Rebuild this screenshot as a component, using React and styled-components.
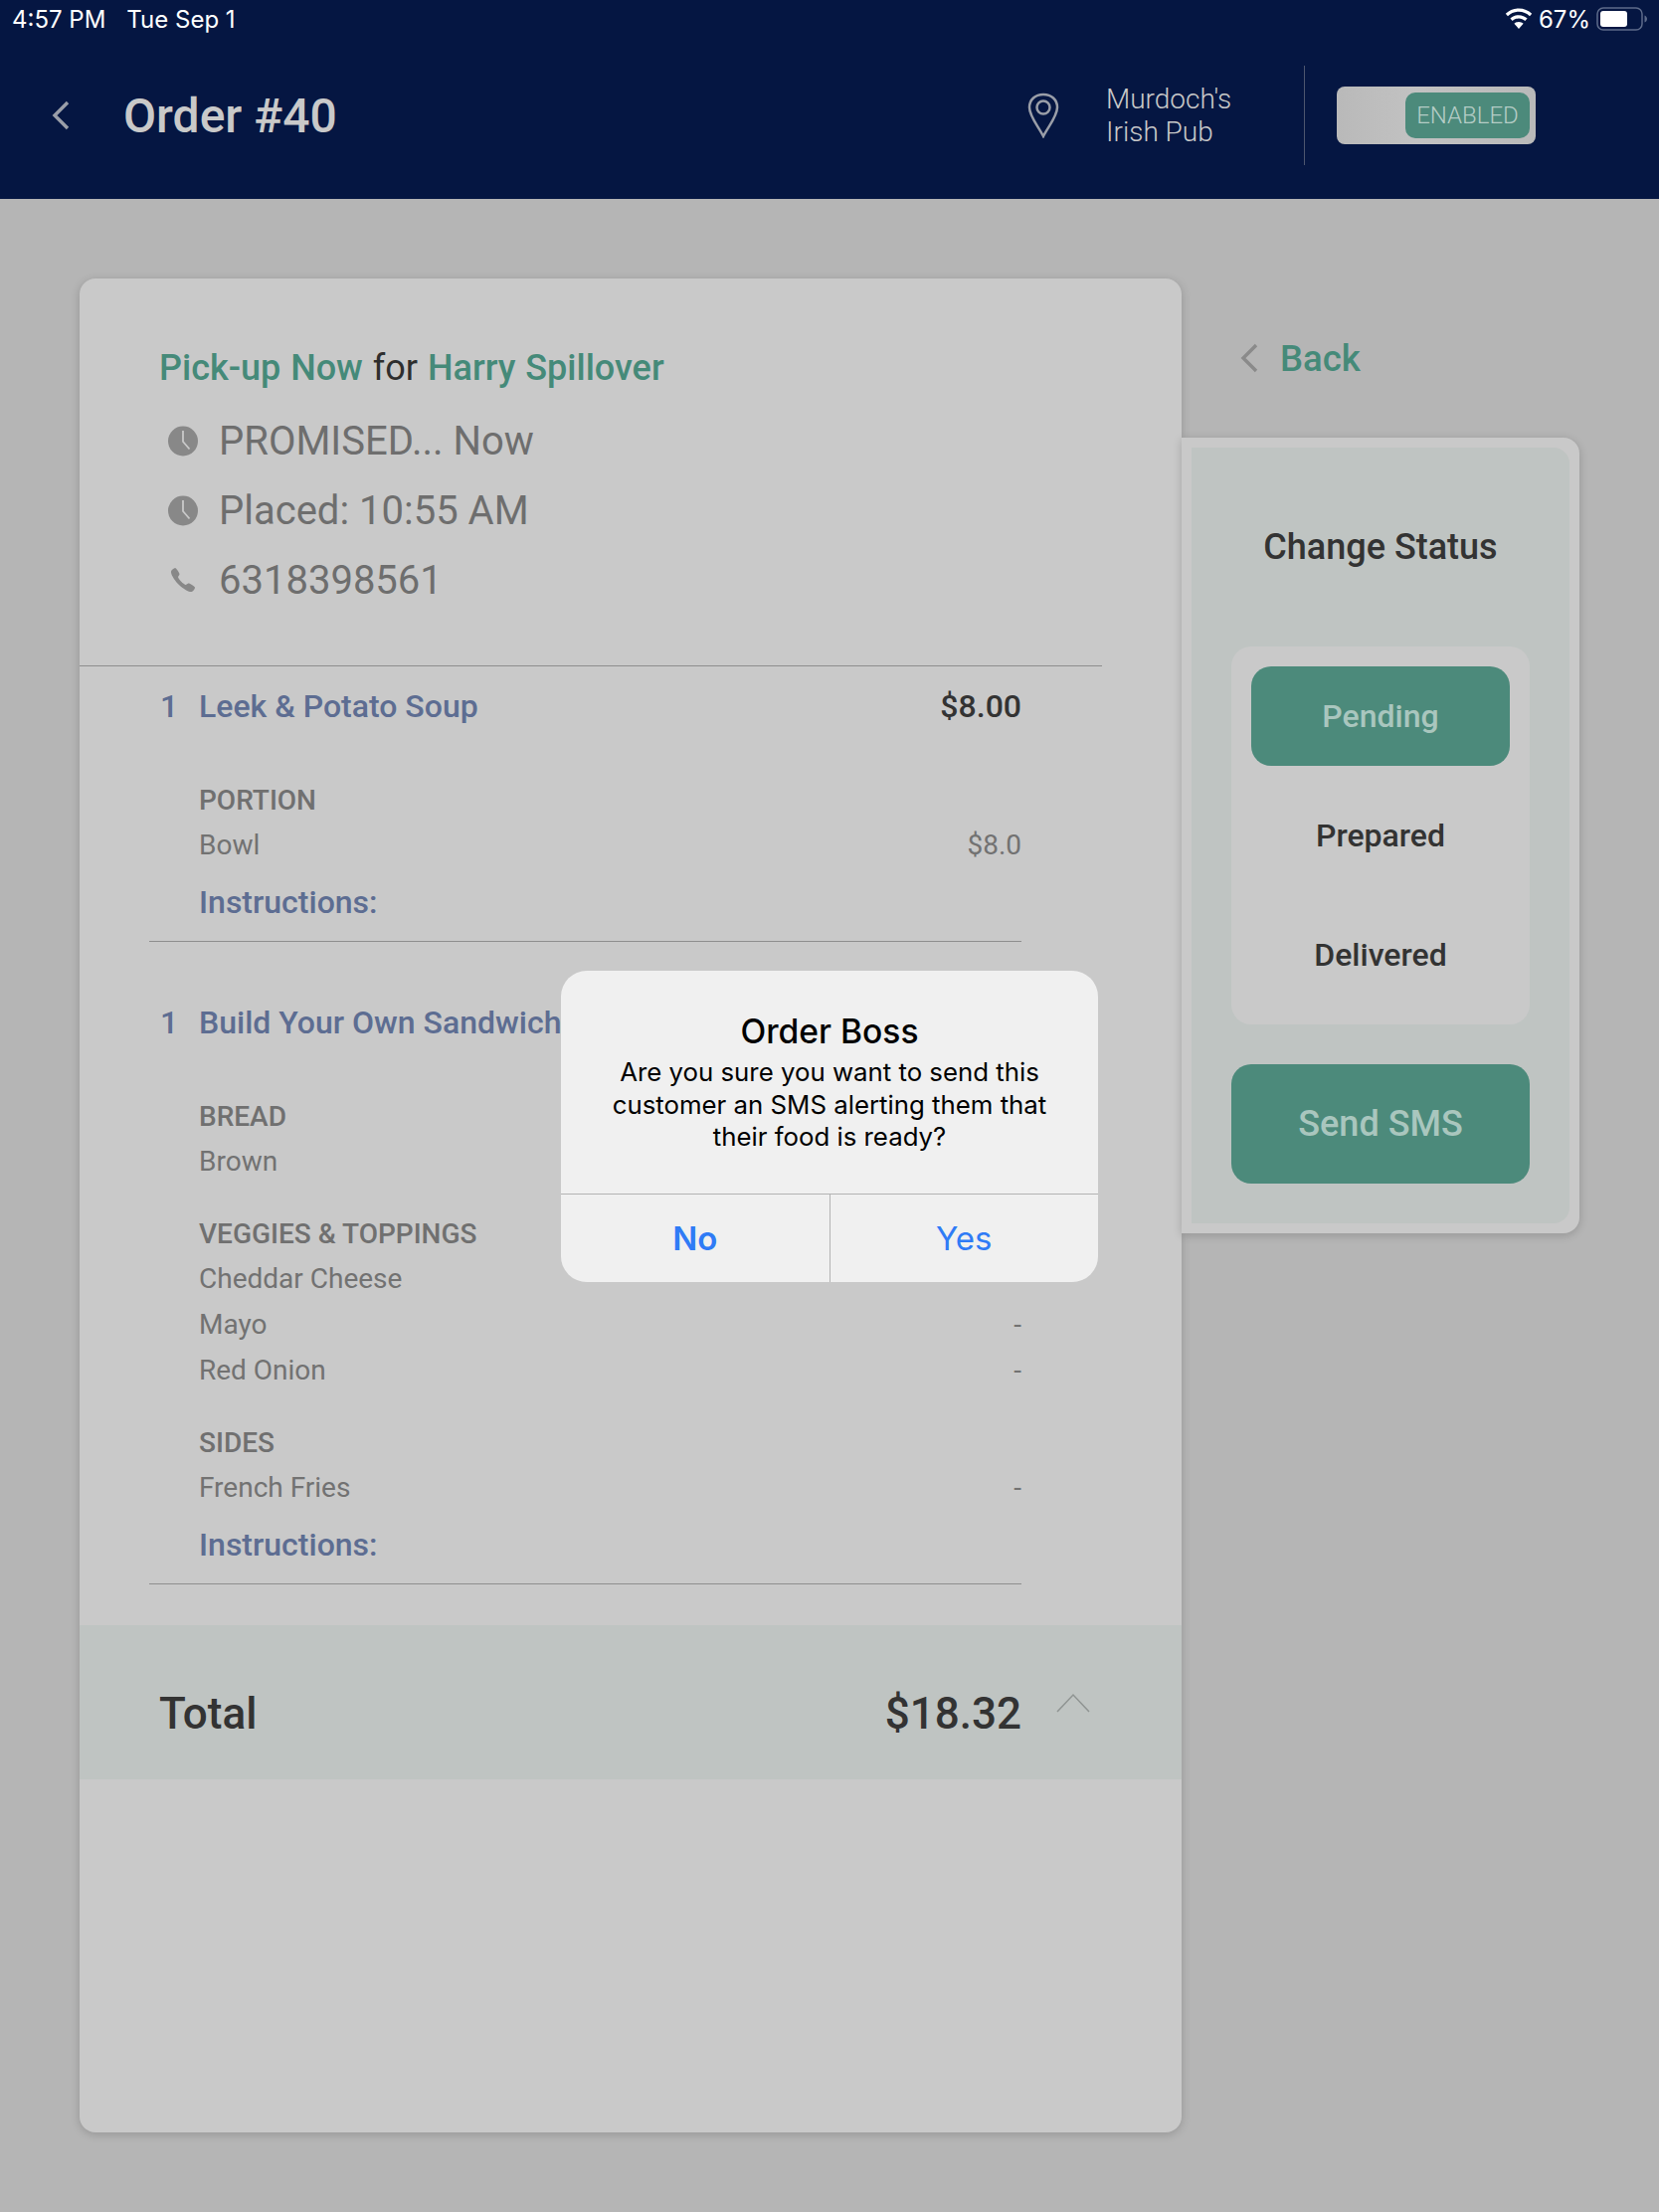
import React from "react";
import styled, { createGlobalStyle } from "styled-components";
import { IoIosCall } from "react-icons/io";

const GlobalStyle = createGlobalStyle`
    html, body {
        margin: 0;
        padding: 0;
        background: #b5b5b5;
    }

    * {
        box-sizing: border-box;
    }
`;

const Page = styled.div`
    position: relative;
    width: 1668px;
    height: 2224px;
    overflow: hidden;
    background: #b5b5b5;
    font-family: Roboto, "Liberation Sans", sans-serif;
`;

const Header = styled.header`
    height: 200px;
    background: #051642;
    display: flex;
    flex-direction: column;
`;

const StatusBar = styled.div`
    height: 38px;
    padding: 0 11px 0 12px;
    display: flex;
    align-items: center;
    justify-content: space-between;
    color: #fff;
    font-family: Inter, sans-serif;
    font-size: 24px;
`;

const StatusGroup = styled.div`
    display: flex;
    align-items: center;
    gap: ${(p) => p.$gap}px;
`;

const NavBar = styled.div`
    flex: 1;
    display: flex;
    align-items: center;
    padding: 0 124px 6px 52px;
`;

const Title = styled.h1`
    margin: 0 0 0 54px;
    flex: 1;
    font-size: 48px;
    font-weight: 500;
    color: #c9c9c9;
`;

const Venue = styled.div`
    margin-left: 47px;
    width: 199px;
    font-size: 28px;
    line-height: 33px;
    font-weight: 300;
    color: #c9c9c9;
`;

const Divider = styled.div`
    width: 1px;
    height: 100px;
    background: #4d566f;
`;

const Toggle = styled.div`
    margin-left: 32px;
    width: 200px;
    height: 58px;
    padding: 6px;
    display: flex;
    justify-content: flex-end;
    border-radius: 8px;
    background: linear-gradient(90deg, #b9b9b9, #c2c2c2 40%, #b9b9b9);
`;

const ToggleKnob = styled.div`
    width: 125px;
    height: 46px;
    display: flex;
    align-items: center;
    justify-content: center;
    border-radius: 10px;
    background: #4c8a7b;
    color: #b5cdc6;
    font-size: 24px;
    font-weight: 300;
`;

const Main = styled.main`
    display: flex;
    align-items: flex-start;
    padding: 80px 0 0 80px;
`;

const Card = styled.section`
    width: 1108px;
    height: 1864px;
    padding-top: 65px;
    border-radius: 16px;
    background: #c9c9c9;
    box-shadow: 0 2px 10px rgba(0, 0, 0, 0.18);
`;

const Summary = styled.div`
    padding: 0 80px;
`;

const SummaryTitle = styled.div`
    font-size: 36px;
    line-height: 50px;
    margin-bottom: 13px;
    word-spacing: 1px;
    color: #2e2e2e;
`;

const Accent = styled.span`
    font-weight: 500;
    color: #458a79;
`;

const InfoRow = styled.div`
    height: 70px;
    display: flex;
    align-items: center;
    gap: 20px;
    padding-left: 8px;
    font-size: 40px;
    color: #6e6e6e;
`;

const PhoneIcon = styled(IoIosCall)`
    flex: none;
    width: 32px;
    height: 32px;
    color: #888;
`;

const Rule = styled.hr`
    margin: ${(p) => p.$margin};
    border: 0;
    border-top: 1px solid #8e8e8e;
`;

const Item = styled.div`
    margin-top: ${(p) => (p.$first ? 0 : 41)}px;
    padding: 0 161px 0 81px;
`;

const ItemHead = styled.div`
    height: 80px;
    display: flex;
    align-items: center;
    margin-bottom: 34px;
    font-size: 32px;
    font-weight: 500;
`;

const Qty = styled.span`
    width: 39px;
    color: #5d6d92;
`;

const ItemName = styled.span`
    flex: 1;
    color: #5d6d92;
`;

const Price = styled.span`
    color: #333;
`;

const OptionGroup = styled.div`
    margin-bottom: 30px;
    padding-left: 39px;
`;

const OptionTitle = styled.div`
    height: 42px;
    line-height: 42px;
    font-size: 28px;
    font-weight: 500;
    color: #707070;
`;

const OptionRow = styled.div`
    height: 46px;
    display: flex;
    align-items: center;
    justify-content: space-between;
    font-size: 28px;
    color: #727272;
`;

const Instructions = styled.div`
    margin: -17px 0 17px 39px;
    height: 44px;
    line-height: 44px;
    font-size: 32px;
    font-weight: 500;
    color: #5d6d92;
`;

const TotalBar = styled.div`
    height: 155px;
    margin-top: 41px;
    padding: 23px 92px 0 80px;
    display: flex;
    align-items: center;
    background: #bfc4c2;
    color: #333;
    font-size: 44px;
    font-weight: 500;
`;

const TotalLabel = styled.span`
    flex: 1;
`;

const Caret = styled.svg`
    width: 34px;
    height: 20px;
    margin: -22px 0 0 35px;
`;

const Side = styled.aside`
    width: 400px;
`;

const BackLink = styled.div`
    height: 160px;
    padding-left: 59px;
    display: flex;
    align-items: center;
    gap: 22px;
    font-size: 36.5px;
    font-weight: 500;
    color: #458a79;
`;

const Panel = styled.div`
    height: 800px;
    padding: 10px;
    border-radius: 0 16px 16px 0;
    background: #c9c9c9;
    box-shadow: 0 2px 10px rgba(0, 0, 0, 0.18);
`;

const PanelInner = styled.div`
    height: 100%;
    padding: 0 40px;
    border-radius: 0 16px 16px 0;
    background: #bfc4c2;
`;

const PanelTitle = styled.div`
    height: 200px;
    padding-bottom: 1px;
    display: flex;
    align-items: center;
    justify-content: center;
    font-size: 36px;
    font-weight: 500;
    color: #333;
`;

const StatusList = styled.div`
    height: 380px;
    padding: 20px;
    display: flex;
    flex-direction: column;
    gap: 20px;
    border-radius: 20px;
    background: #c9c9c9;
`;

const StatusOption = styled.div`
    height: 100px;
    display: flex;
    align-items: center;
    justify-content: center;
    border-radius: 20px;
    font-size: 32px;
    font-weight: 500;
    color: ${(p) => (p.$active ? "#a9c6be" : "#333")};
    background: ${(p) => (p.$active ? "#4c8a7b" : "transparent")};
`;

const SmsButton = styled.div`
    height: 120px;
    margin-top: 40px;
    display: flex;
    align-items: center;
    justify-content: center;
    border-radius: 20px;
    background: #4c8a7b;
    color: #a9c6be;
    font-size: 36px;
    font-weight: 500;
`;

const Dialog = styled.div`
    position: absolute;
    left: 564px;
    top: 976px;
    width: 540px;
    height: 313px;
    display: flex;
    flex-direction: column;
    border-radius: 26px;
    overflow: hidden;
    background: #f0f0f0;
    color: #000;
    font-family: Inter, sans-serif;
`;

const DialogBody = styled.div`
    flex: 1;
    padding-top: 43px;
    text-align: center;
    font-size: 25.8px;
    line-height: 32.5px;
`;

const DialogTitle = styled.div`
    margin-bottom: 7px;
    font-size: 33.6px;
    line-height: 36px;
    font-weight: 500;
`;

const DialogActions = styled.div`
    height: 89px;
    display: flex;
    border-top: 1px solid #b3b3b3;
`;

const DialogAction = styled.div`
    flex: 1;
    display: flex;
    align-items: center;
    justify-content: center;
    font-size: 33px;
    font-weight: ${(p) => (p.$strong ? 600 : 400)};
    color: #2f7bf6;

    & + & {
        border-left: 1px solid #b3b3b3;
    }
`;

const Chevron = ({ color }) => (
    <svg width="18" height="30" viewBox="0 0 18 30" fill="none">
        <path d="M16 2 L3 15 L16 28" stroke={color} strokeWidth="3.4" />
    </svg>
);

const ClockIcon = () => (
    <svg width="32" height="32" viewBox="0 0 32 32" fill="none">
        <circle cx="16" cy="16.5" r="15" fill="#888" />
        <path d="M16 6 V17 L22.5 24.5" stroke="#c9c9c9" strokeWidth="1.8" />
    </svg>
);

const WifiIcon = () => (
    <svg width="28" height="22" viewBox="0 0 28 22" fill="#fff">
        <path d="M14 0.5C8.8 0.5 4.2 2.5 0.8 5.8L3 8.2C5.9 5.5 9.8 3.8 14 3.8s8.1 1.7 11 4.4l2.2-2.4C23.8 2.5 19.2 0.5 14 0.5z" />
        <path d="M14 7.2c-3.3 0-6.3 1.3-8.6 3.4l2.3 2.4c1.7-1.5 3.9-2.5 6.3-2.5s4.6 1 6.3 2.5l2.3-2.4C20.3 8.5 17.3 7.2 14 7.2z" />
        <path d="M14 14c-1.8 0-3.4 0.7-4.6 1.8L14 21l4.6-5.2C17.4 14.7 15.8 14 14 14z" />
    </svg>
);

const BatteryIcon = () => (
    <svg width="52" height="24" viewBox="0 0 52 24">
        <rect x="1" y="1" width="45" height="22" rx="6" fill="none" stroke="#5e6b8a" strokeWidth="1.5" />
        <rect x="4" y="4" width="27" height="16" rx="3" fill="#fff" />
        <path d="M48.5 8.5c1.5 0.5 2.5 2 2.5 3.5s-1 3-2.5 3.5z" fill="#5e6b8a" />
    </svg>
);

const PinIcon = () => (
    <svg width="32" height="46" viewBox="0 0 32 46" fill="none" stroke="#9a9ea8" strokeWidth="2.5">
        <path d="M16 44 C11 34 2 24 2 15 C2 7 8 2 16 2 C24 2 30 7 30 15 C30 24 21 34 16 44 Z" />
        <circle cx="16" cy="15" r="6.5" />
    </svg>
);

const items = [
    {
        name: "Leek & Potato Soup",
        price: "$8.00",
        groups: [{ title: "PORTION", rows: [["Bowl", "$8.0"]] }],
    },
    {
        name: "Build Your Own Sandwich",
        price: "",
        groups: [
            { title: "BREAD", rows: [["Brown", "-"]] },
            {
                title: "VEGGIES & TOPPINGS",
                rows: [["Cheddar Cheese", "-"], ["Mayo", "-"], ["Red Onion", "-"]],
            },
            { title: "SIDES", rows: [["French Fries", "-"]] },
        ],
    },
];

const App = () => (
    <Page>
        <GlobalStyle />
        <Header>
            <StatusBar>
                <StatusGroup $gap={21}>
                    <span>4:57 PM</span>
                    <span>Tue Sep 1</span>
                </StatusGroup>
                <StatusGroup $gap={6}>
                    <WifiIcon />
                    <span>67%</span>
                    <BatteryIcon />
                </StatusGroup>
            </StatusBar>
            <NavBar>
                <Chevron color="#9a9ea8" />
                <Title>Order #40</Title>
                <PinIcon />
                <Venue>Murdoch's<br />Irish Pub</Venue>
                <Divider />
                <Toggle>
                    <ToggleKnob>ENABLED</ToggleKnob>
                </Toggle>
            </NavBar>
        </Header>
        <Main>
            <Card>
                <Summary>
                    <SummaryTitle>
                        <Accent>Pick-up Now</Accent> for <Accent>Harry Spillover</Accent>
                    </SummaryTitle>
                    <InfoRow><ClockIcon />PROMISED... Now</InfoRow>
                    <InfoRow><ClockIcon />Placed: 10:55 AM</InfoRow>
                    <InfoRow><PhoneIcon />6318398561</InfoRow>
                </Summary>
                <Rule $margin="51px 80px 0 0" />
                {items.map((item, i) => (
                    <React.Fragment key={item.name}>
                        <Item $first={i === 0}>
                            <ItemHead>
                                <Qty>1</Qty>
                                <ItemName>{item.name}</ItemName>
                                <Price>{item.price}</Price>
                            </ItemHead>
                            {item.groups.map((group) => (
                                <OptionGroup key={group.title}>
                                    <OptionTitle>{group.title}</OptionTitle>
                                    {group.rows.map(([label, value]) => (
                                        <OptionRow key={label}>
                                            <span>{label}</span>
                                            <span>{value}</span>
                                        </OptionRow>
                                    ))}
                                </OptionGroup>
                            ))}
                            <Instructions>Instructions:</Instructions>
                        </Item>
                        <Rule $margin="0 161px 0 70px" />
                    </React.Fragment>
                ))}
                <TotalBar>
                    <TotalLabel>Total</TotalLabel>
                    <span>$18.32</span>
                    <Caret viewBox="0 0 34 20" fill="none">
                        <path d="M1 19 L17 2 L33 19" stroke="#8f9492" strokeWidth="1.5" />
                    </Caret>
                </TotalBar>
            </Card>
            <Side>
                <BackLink>
                    <Chevron color="#8a8a8a" />
                    Back
                </BackLink>
                <Panel>
                    <PanelInner>
                        <PanelTitle>Change Status</PanelTitle>
                        <StatusList>
                            <StatusOption $active>Pending</StatusOption>
                            <StatusOption>Prepared</StatusOption>
                            <StatusOption>Delivered</StatusOption>
                        </StatusList>
                        <SmsButton>Send SMS</SmsButton>
                    </PanelInner>
                </Panel>
            </Side>
        </Main>
        <Dialog>
            <DialogBody>
                <DialogTitle>Order Boss</DialogTitle>
                Are you sure you want to send this<br />
                customer an SMS alerting them that<br />
                their food is ready?
            </DialogBody>
            <DialogActions>
                <DialogAction $strong>No</DialogAction>
                <DialogAction>Yes</DialogAction>
            </DialogActions>
        </Dialog>
    </Page>
);

export default App;
